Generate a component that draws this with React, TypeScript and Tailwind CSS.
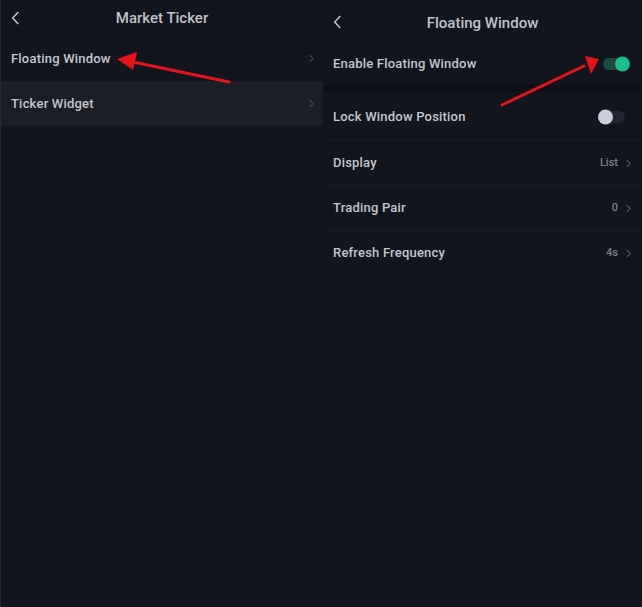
import React, { useState } from 'react';

function Chevron({ className = '' }: { className?: string }) {
  return (
    <svg viewBox="0 0 6 10" className={className} fill="none" stroke="currentColor" strokeWidth="1.2">
      <path d="M1 1l4 4-4 4" />
    </svg>
  );
}

function Back({ className = '' }: { className?: string }) {
  return (
    <svg viewBox="0 0 9 15" className={className} fill="none" stroke="currentColor" strokeWidth="1.6">
      <path d="M7.5 1L1.5 7.5l6 6.5" />
    </svg>
  );
}

function Toggle({ on, onClick }: { on: boolean; onClick: () => void }) {
  return (
    <button
      onClick={onClick}
      className={`relative h-[12px] w-[26px] rounded-full ${on ? 'bg-[#1d4a40]' : 'bg-[#222630]'}`}
    >
      <span
        className={`absolute top-1/2 h-[15px] w-[15px] -translate-y-1/2 rounded-full ${
          on ? 'right-[-1px] bg-[#1ebb8b]' : 'left-[-1px] bg-[#c7cedc]'
        }`}
      />
    </button>
  );
}

export default function App() {
  const [enabled, setEnabled] = useState(true);
  const [locked, setLocked] = useState(false);

  const settings = [
    { label: 'Display', value: 'List' },
    { label: 'Trading Pair', value: '0' },
    { label: 'Refresh Frequency', value: '4s' },
  ];

  return (
    <div
      className="relative flex h-[607px] w-[642px] border-l border-[#262a33] bg-[#12151d] text-[#c3c7cf]"
      style={{ fontFamily: 'Roboto, "Noto Sans", sans-serif' }}
    >
      {/* left panel */}
      <div className="w-[322px] shrink-0">
        <div className="relative flex h-[36px] items-center justify-center">
          <Back className="absolute left-[10px] top-[11px] h-[14px] w-[9px] text-[#c0c4cc]" />
          <span className="text-[15px] font-medium text-[#bfc3cb]">Market Ticker</span>
        </div>
        <div className="flex h-[45px] items-center justify-between pl-[10px] pr-[9px]">
          <span className="text-[13px] font-medium tracking-[0.2px]">Floating Window</span>
          <Chevron className="h-[9px] w-[5px] text-[#5c616b]" />
        </div>
        <div className="flex h-[45px] items-center justify-between bg-[#1b1e27] pl-[10px] pr-[9px]">
          <span className="text-[13px] font-medium tracking-[0.2px]">Ticker Widget</span>
          <Chevron className="h-[9px] w-[5px] text-[#5c616b]" />
        </div>
      </div>

      {/* right panel */}
      <div className="flex-1">
        <div className="relative flex h-[42px] items-center justify-center pt-[4px]">
          <Back className="absolute left-[10px] top-[15px] h-[14px] w-[9px] text-[#c0c4cc]" />
          <span className="text-[15px] font-medium text-[#bfc3cb]">Floating Window</span>
        </div>
        <div className="flex h-[43px] items-center justify-between pl-[10px] pr-[13px]">
          <span className="text-[13px] font-medium tracking-[0.2px]">Enable Floating Window</span>
          <Toggle on={enabled} onClick={() => setEnabled(!enabled)} />
        </div>
        <div className="h-[7px] bg-[#0e1016]" />
        <div className="flex h-[48px] items-center justify-between pl-[10px] pr-[17px] pt-[2px]">
          <span className="text-[13px] font-medium tracking-[0.2px]">Lock Window Position</span>
          <Toggle on={locked} onClick={() => setLocked(!locked)} />
        </div>
        {settings.map((s) => (
          <div key={s.label} className="flex h-[45px] items-center justify-between border-t border-[#191c24] pl-[10px] pr-[11px]">
            <span className="text-[13px] font-medium tracking-[0.2px]">{s.label}</span>
            <div className="flex items-center gap-[8px]">
              <span className="text-[11px] font-medium text-[#7b808a]">{s.value}</span>
              <Chevron className="h-[9px] w-[5px] text-[#7b808a]" />
            </div>
          </div>
        ))}
      </div>

      {/* annotation arrows */}
      <svg className="pointer-events-none absolute inset-0" width="642" height="607">
        <g stroke="#e4141b" strokeWidth="3" fill="#e4141b" strokeLinecap="round">
          <line x1="228" y1="82" x2="132" y2="62" />
          <polygon points="116,59 136,52 132,70" stroke="none" />
          <line x1="501" y1="105" x2="583" y2="66" />
          <polygon points="598,59 584,56 590,74" stroke="none" />
        </g>
      </svg>
    </div>
  );
}
